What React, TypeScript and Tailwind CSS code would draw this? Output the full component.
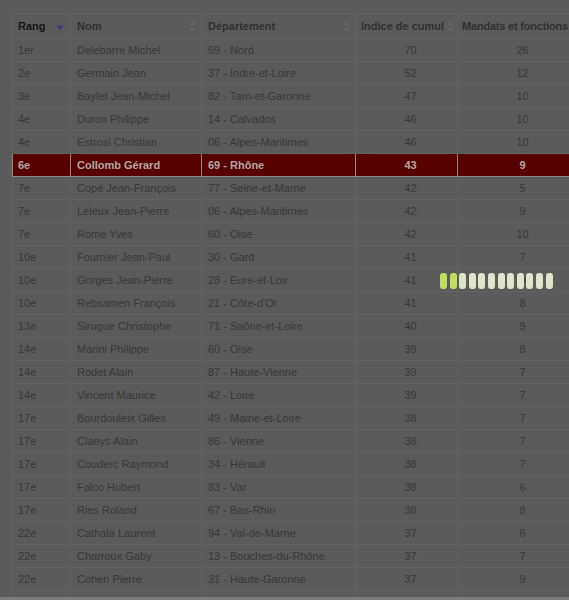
import React from "react";

type Row = [string, string, string, string, string];

const rows: Row[] = [
  ["1er", "Delebarre Michel", "59 - Nord", "70", "26"],
  ["2e", "Germain Jean", "37 - Indre-et-Loire", "52", "12"],
  ["3e", "Baylet Jean-Michel", "82 - Tarn-et-Garonne", "47", "10"],
  ["4e", "Duron Philippe", "14 - Calvados", "46", "10"],
  ["4e", "Estrosi Christian", "06 - Alpes-Maritimes", "46", "10"],
  ["6e", "Collomb Gérard", "69 - Rhône", "43", "9"],
  ["7e", "Copé Jean-François", "77 - Seine-et-Marne", "42", "5"],
  ["7e", "Leleux Jean-Pierre", "06 - Alpes-Maritimes", "42", "9"],
  ["7e", "Rome Yves", "60 - Oise", "42", "10"],
  ["10e", "Fournier Jean-Paul", "30 - Gard", "41", "7"],
  ["10e", "Gorges Jean-Pierre", "28 - Eure-et-Loir", "41", "9"],
  ["10e", "Rebsamen François", "21 - Côte-d'Or", "41", "8"],
  ["13e", "Sirugue Christophe", "71 - Saône-et-Loire", "40", "9"],
  ["14e", "Marini Philippe", "60 - Oise", "39", "8"],
  ["14e", "Rodet Alain", "87 - Haute-Vienne", "39", "7"],
  ["14e", "Vincent Maurice", "42 - Loire", "39", "7"],
  ["17e", "Bourdouleix Gilles", "49 - Maine-et-Loire", "38", "7"],
  ["17e", "Claeys Alain", "86 - Vienne", "38", "7"],
  ["17e", "Couderc Raymond", "34 - Hérault", "38", "7"],
  ["17e", "Falco Hubert", "83 - Var", "38", "6"],
  ["17e", "Ries Roland", "67 - Bas-Rhin", "38", "8"],
  ["22e", "Cathala Laurent", "94 - Val-de-Marne", "37", "6"],
  ["22e", "Charroux Gaby", "13 - Bouches-du-Rhône", "37", "7"],
  ["22e", "Cohen Pierre", "31 - Haute-Garonne", "37", "9"],
  ["22e", "Gaillard Geneviève", "33 - Gironde", "37", "11"],
];

function SortBoth() {
  return (
    <svg width="7" height="13" viewBox="0 0 7 13" className="shrink-0">
      <path d="M3.5 1 L6.5 5 L0.5 5 Z" fill="#666666" />
      <path d="M3.5 12 L6.5 8 L0.5 8 Z" fill="#666666" />
    </svg>
  );
}

function SortDown() {
  return (
    <svg width="8" height="6" viewBox="0 0 8 6" className="shrink-0">
      <path d="M0.5 0.5 L7.5 0.5 L4 5.5 Z" fill="#3c3c86" />
    </svg>
  );
}

export default function App() {
  const bars = Array.from({ length: 12 }, (_, i) => i);
  return (
    <div
      className="relative w-[569px] h-[600px] bg-[#5b5b5b] overflow-hidden"
      style={{ fontFamily: '"Liberation Sans", Arial, sans-serif' }}
    >
      <div className="h-[597px] overflow-hidden pt-[13px] pl-[12px]">
        <table className="table-fixed border-collapse w-[575px] text-[11px]">
          <colgroup>
            <col className="w-[58px]" />
            <col className="w-[131px]" />
            <col className="w-[154px]" />
            <col className="w-[102px]" />
            <col className="w-[130px]" />
          </colgroup>
          <thead>
            <tr className="h-[25px]">
              <th className="border border-[#626262] px-[5px] text-left font-bold text-[#141414] whitespace-nowrap">
                <div className="flex items-center justify-between">
                  <span>Rang</span>
                  <span className="mt-[4px] mr-[1px]">
                    <SortDown />
                  </span>
                </div>
              </th>
              <th className="border border-[#626262] pl-[6px] pr-[5px] text-left font-bold text-[#2f2f2f] whitespace-nowrap">
                <div className="flex items-center justify-between">
                  <span>Nom</span>
                  <SortBoth />
                </div>
              </th>
              <th className="border border-[#626262] pl-[6px] pr-[5px] text-left font-bold text-[#2f2f2f] whitespace-nowrap">
                <div className="flex items-center justify-between">
                  <span>Département</span>
                  <SortBoth />
                </div>
              </th>
              <th className="border border-[#626262] pl-[5px] pr-[3px] text-left font-bold text-[#2f2f2f] whitespace-nowrap">
                <div className="flex items-center justify-between">
                  <span>Indice de cumul</span>
                  <SortBoth />
                </div>
              </th>
              <th className="border border-[#626262] pl-[4px] pr-[5px] text-left font-bold text-[#2f2f2f] whitespace-nowrap tracking-[-0.2px]">
                <span>Mandats et fonctions</span>
              </th>
            </tr>
          </thead>
          <tbody>
            {rows.map((r, i) => {
              const hl = i === 5;
              const cell = hl
                ? "border border-[#8a8a8a] bg-[#570000] text-[#b3a6a6] font-bold"
                : "border border-[#626262] text-[#383838]";
              return (
                <tr key={i} className="h-[23px]">
                  <td className={`${cell} px-[5px] whitespace-nowrap`}>{r[0]}</td>
                  <td className={`${cell} pl-[6px] whitespace-nowrap overflow-hidden`}>{r[1]}</td>
                  <td className={`${cell} pl-[6px] whitespace-nowrap overflow-hidden`}>{r[2]}</td>
                  <td className={`${cell} pl-[8px] text-center`}>{r[3]}</td>
                  <td className={`${cell} text-center`}>{r[4]}</td>
                </tr>
              );
            })}
          </tbody>
        </table>
      </div>
      <div className="h-[3px] bg-[#7b7b7b]" />

      <div className="absolute left-[440px] top-[273px] flex gap-[2.6px]">
        {bars.map((i) => (
          <div
            key={i}
            className={
              i < 2
                ? "w-[7px] h-[16px] rounded-[3px] bg-[#bfe05e]"
                : "w-[7px] h-[16px] rounded-[3px] bg-[#dfe5cb]"
            }
          />
        ))}
      </div>
    </div>
  );
}
